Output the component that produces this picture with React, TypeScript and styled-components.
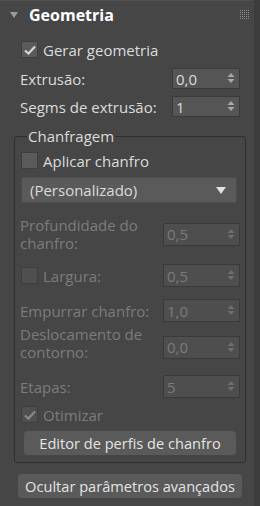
import React from 'react';
import styled, { createGlobalStyle } from 'styled-components';

const Global = createGlobalStyle`
    html, body {
        margin: 0;
        padding: 0;
        background: #3c3c3c;
    }
    body {
        font-family: "Open Sans", "Noto Sans", sans-serif;
        font-size: 15px;
        color: #dcdcdc;
    }
`;

export const Panel = styled.div`
    width: 254px;
    height: 506px;
    background: #464646;
    border-top: 1px solid #505050;
    box-sizing: border-box;
    padding: 0 8px 0 14px;
`;

export const Header = styled.div`
    display: flex;
    align-items: center;
    height: 27px;
    margin-left: -14px;
    margin-right: -8px;
    padding: 0 4px 0 10px;
`;

export const Title = styled.span`
    flex: 1;
    margin-left: 11px;
    font-size: 16px;
    font-weight: 700;
    color: #ffffff;
`;

export const Row = styled.div<{ $h?: number; $mt: number; $pad?: number }>`
    display: flex;
    align-items: center;
    justify-content: space-between;
    min-height: ${(p) => p.$h ?? 21}px;
    margin-top: ${(p) => p.$mt}px;
    padding: 0 ${(p) => p.$pad ?? 6}px 0 ${(p) => p.$pad ?? 6}px;
`;

export const Label = styled.span<{ $off?: boolean; $two?: boolean }>`
    color: ${(p) => (p.$off ? '#7c7c7c' : '#dcdcdc')};
    line-height: 18px;
    white-space: nowrap;
    padding-bottom: ${(p) => (p.$two ? 8 : 0)}px;
`;

export const CheckRow = styled.label<{ $mt: number }>`
    display: flex;
    align-items: center;
    height: 17px;
    margin-top: ${(p) => p.$mt}px;
    padding-left: 7px;
`;

export const Box = styled.span<{ $off?: boolean }>`
    display: inline-flex;
    align-items: center;
    justify-content: center;
    width: 15px;
    height: 15px;
    background: ${(p) => (p.$off ? '#4f4f4f' : '#5a5a5a')};
    border: 1px solid #3e3e3e;
    margin-right: 5px;
`;

export const Spinner = styled.div<{ $off?: boolean }>`
    display: flex;
    align-items: center;
    justify-content: space-between;
    box-sizing: border-box;
    width: ${(p) => (p.$off ? 77 : 68)}px;
    height: ${(p) => (p.$off ? 23 : 21)}px;
    background: ${(p) => (p.$off ? '#4e4e4e' : '#555555')};
    border: 1px solid #3a3a3a;
    padding: 0 4px 0 3px;
    color: ${(p) => (p.$off ? '#7c7c7c' : '#dcdcdc')};
`;

export const Group = styled.fieldset`
    margin: 10px 0 0 0;
    padding: 0 5px 7px 5px;
    border: 1px solid #2f2f2f;
    border-radius: 3px;
    min-width: 0;
`;

export const Legend = styled.legend`
    margin-left: 7px;
    padding: 0 1px;
    line-height: 18px;
    color: #dcdcdc;
`;

export const Dropdown = styled.div`
    display: flex;
    align-items: center;
    justify-content: space-between;
    height: 26px;
    margin: 8px 3px 0 1px;
    padding: 0 10px 0 8px;
    background: #5a5a5a;
    border: 1px solid #4c4c4c;
    box-sizing: border-box;
`;

export const Button = styled.div<{ $mt: number; $mx: string }>`
    display: flex;
    align-items: center;
    justify-content: center;
    height: 24px;
    margin: ${(p) => p.$mt}px ${(p) => p.$mx} 0;
    background: #5a5a5a;
    border-radius: 4px;
    color: #e4e4e4;
    font-size: 14.6px;
    box-sizing: border-box;
    white-space: nowrap;
`;

const Arrows = ({ off }: { off?: boolean }) => (
    <svg width="8" height="11" viewBox="0 0 8 11">
        <polygon points="0.5,4 4,0 7.5,4" fill={off ? '#6e6e6e' : '#a8a8a8'} />
        <polygon points="0.5,6 4,10 7.5,6" fill={off ? '#6e6e6e' : '#a8a8a8'} />
    </svg>
);

const Check = ({ off }: { off?: boolean }) => (
    <svg width="12" height="10" viewBox="0 0 12 10">
        <path d="M1 5.5 L4.5 8.5 L11 1.5" stroke={off ? '#8a8a8a' : '#d6d6d6'} strokeWidth="2.2" fill="none" />
    </svg>
);

const Grip = () => (
    <svg width="10" height="9" viewBox="0 0 10 9">
        {[0, 2, 4, 6, 8].map((y) =>
            [0, 2, 4, 6, 8].map((x) => <rect key={`${x}-${y}`} x={x} y={y} width="1" height="1" fill="#8c8c8c" />)
        )}
    </svg>
);

const Field = ({ value, off }: { value: string; off?: boolean }) => (
    <Spinner $off={off}>
        <span>{value}</span>
        <Arrows off={off} />
    </Spinner>
);

export default function App() {
    return (
        <>
            <Global />
            <Panel>
                <Header>
                    <svg width="8" height="6" viewBox="0 0 8 6">
                        <polygon points="0,0 8,0 4,6" fill="#9a9a9a" />
                    </svg>
                    <Title>Geometria</Title>
                    <Grip />
                </Header>

                <CheckRow $mt={13}>
                    <Box>
                        <Check />
                    </Box>
                    <Label>Gerar geometria</Label>
                </CheckRow>
                <Row $mt={10}>
                    <Label>Extrusão:</Label>
                    <Field value="0,0" />
                </Row>
                <Row $mt={7}>
                    <Label>Segms de extrusão:</Label>
                    <Field value="1" />
                </Row>

                <Group>
                    <Legend>Chanfragem</Legend>
                    <CheckRow $mt={7} style={{ paddingLeft: 1 }}>
                        <Box />
                        <Label>Aplicar chanfro</Label>
                    </CheckRow>
                    <Dropdown>
                        <Label>(Personalizado)</Label>
                        <svg width="10" height="7" viewBox="0 0 10 7">
                            <polygon points="0,0 10,0 5,7" fill="#e0e0e0" />
                        </svg>
                    </Dropdown>
                    <Row $mt={13} $pad={0}>
                        <Label $off>
                            Profundidade do
                            <br />
                            chanfro:
                        </Label>
                        <Field value="0,5" off />
                    </Row>
                    <Row $mt={12} $h={23} $pad={0}>
                        <CheckRow $mt={0} style={{ paddingLeft: 1 }}>
                            <Box $off />
                            <Label $off>Largura:</Label>
                        </CheckRow>
                        <Field value="0,5" off />
                    </Row>
                    <Row $mt={12} $h={23} $pad={0}>
                        <Label $off>Empurrar chanfro:</Label>
                        <Field value="1,0" off />
                    </Row>
                    <Row $mt={3} $pad={0}>
                        <Label $off $two>
                            Deslocamento de
                            <br />
                            contorno:
                        </Label>
                        <Field value="0,0" off />
                    </Row>
                    <Row $mt={6} $h={23} $pad={0}>
                        <Label $off>Etapas:</Label>
                        <Field value="5" off />
                    </Row>
                    <CheckRow $mt={8} style={{ paddingLeft: 1 }}>
                        <Box $off>
                            <Check off />
                        </Box>
                        <Label $off>Otimizar</Label>
                    </CheckRow>
                    <Button $mt={8} $mx="4px">
                        Editor de perfis de chanfro
                    </Button>
                </Group>

                <Button $mt={11} $mx="4px">
                    Ocultar parâmetros avançados
                </Button>
            </Panel>
        </>
    );
}
